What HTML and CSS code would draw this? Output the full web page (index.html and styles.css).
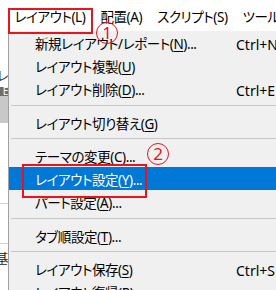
FILE: index.html
```html
<!DOCTYPE html>
<html>
<head>
    <meta charset="utf-8">
    <title>レイアウトメニュー</title>
    <link rel="stylesheet" href="styles.css">
</head>
<body>
    <div class="menubar">
        <span class="menubar-item">レイアウト(L)</span>
        <span class="menubar-item">配置(A)</span>
        <span class="menubar-item">スクリプト(S)</span>
        <span class="menubar-item">ツール(T)</span>
    </div>

    <div class="workspace">
        <div class="side">
            <div class="side-gap side-gap-1"></div>
            <div class="side-text side-text-1"><span>レ</span></div>
            <div class="side-gap side-gap-2"></div>
            <div class="side-head"><span>E</span></div>
            <div class="side-row"></div>
            <div class="side-blank side-blank-1"></div>
            <div class="side-blank side-blank-2"></div>
            <div class="side-gap side-gap-3"></div>
            <div class="side-text side-text-2"><span>基</span></div>
        </div>

        <ul class="menu">
            <li class="menu-item">
                <span>新規レイアウト/レポート(<u>N</u>)...</span>
                <span class="shortcut">Ctrl+N</span>
            </li>
            <li class="menu-item"><span>レイアウト複製(<u>U</u>)</span></li>
            <li class="menu-item">
                <span>レイアウト削除(<u>D</u>)...</span>
                <span class="shortcut">Ctrl+E</span>
            </li>
            <li class="separator"></li>
            <li class="menu-item"><span>レイアウト切り替え(<u>G</u>)</span></li>
            <li class="separator"></li>
            <li class="menu-item"><span>テーマの変更(C)...</span></li>
            <li class="menu-item active"><span>レイアウト設定(<u>Y</u>)...</span></li>
            <li class="menu-item"><span>パート設定(<u>A</u>)...</span></li>
            <li class="separator"></li>
            <li class="menu-item"><span>タブ順設定(<u>T</u>)...</span></li>
            <li class="separator"></li>
            <li class="menu-item">
                <span>レイアウト保存(<u>S</u>)</span>
                <span class="shortcut">Ctrl+S</span>
            </li>
            <li class="menu-item"><span>レイアウト復帰(<u>R</u>)</span></li>
        </ul>
    </div>

    <!-- annotations drawn over the screenshot -->
    <div class="mark mark-1"></div>
    <div class="step step-1">1</div>
    <div class="mark mark-2"></div>
    <div class="step step-2">2</div>
</body>
</html>
```

FILE: styles.css
```css
body {
    margin: 0;
    width: 276px;
    height: 290px;
    overflow: hidden;
    position: relative;
    background: white;
    color: #000;
    font-family: "Noto Sans", "Noto Sans CJK JP", sans-serif;
    font-size: 13.5px;
    letter-spacing: -0.4px;
    font-feature-settings: "palt";
}
.menubar {
    height: 31px;
    padding-left: 7px;
    display: flex;
    white-space: nowrap;
    overflow: hidden;
    background: white;
}
.menubar-item {
    padding: 3px 7.5px 0;
    line-height: 28px;
}
.workspace {
    display: flex;
    height: 259px;
}
.side {
    width: 8px;
    flex: none;
    overflow: hidden;
    display: flex;
    flex-direction: column;
}
.side-gap-1 { height: 39px; }
.side-gap-2 { height: 7px; }
.side-gap-3 { height: 8px; }
.side-text {
    display: flex;
    justify-content: flex-end;
    height: 12px;
    line-height: 12px;
    font-size: 13px;
    color: #222;
}
.side-text-1 { height: 10px; line-height: 10px; }
.side-head {
    height: 9px;
    background: #6e6e6e;
    color: white;
    font-size: 10px;
    line-height: 9px;
    display: flex;
    justify-content: flex-end;
}
.side-row {
    height: 27px;
    background: #c8c8c8;
}
.side-blank {
    border-bottom: 1px solid #d4d4d4;
}
.side-blank-1 { height: 80px; }
.side-blank-2 { height: 39px; }
.menu {
    flex: 1;
    margin: 0;
    padding: 0;
    list-style: none;
    background: #f0f0f0;
    border-left: 1px solid #a0a0a0;
    overflow: hidden;
}
.menu-item {
    display: grid;
    grid-template-columns: 201px auto;
    height: 23px;
    box-sizing: border-box;
    padding: 4px 0 0 26px;
    line-height: 19px;
    white-space: nowrap;
}
.menu-item u {
    text-underline-offset: 2px;
}
.menu-item.active {
    background: #0078d7;
    color: white;
}
.shortcut {
    font-size: 14px;
    letter-spacing: 0;
}
.separator {
    height: 1px;
    margin: 4.5px 0 5px 2px;
    background: #c6c6c6;
}
.mark {
    position: absolute;
    border: 2px solid #e8141e;
    box-sizing: border-box;
}
.mark-1 {
    left: 8px;
    top: 8px;
    width: 85px;
    height: 26px;
}
.mark-2 {
    left: 22px;
    top: 164px;
    width: 125px;
    height: 34px;
}
.step {
    position: absolute;
    width: 22px;
    height: 22px;
    box-sizing: border-box;
    border: 1.5px solid #e8141e;
    border-radius: 50%;
    color: #e8141e;
    font-size: 17px;
    letter-spacing: 0;
    line-height: 19px;
    text-align: center;
}
.step-1 {
    left: 96px;
    top: 22px;
}
.step-2 {
    left: 147px;
    top: 143px;
}
```
